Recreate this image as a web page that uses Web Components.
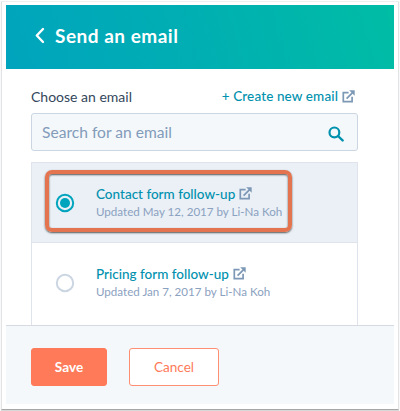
<!DOCTYPE html>
<html lang="en">
<head>
<meta charset="utf-8">
<title>Send an email</title>
<style>
html, body {
    margin: 0;
    height: 100%;
    overflow: hidden;
    background: #fff;
}
body {
    font-family: Lato, "Open Sans", sans-serif;
    font-size: 14px;
    color: #33475b;
}
</style>
</head>
<body>
<email-panel>
    <panel-header slot="header">Send an email</panel-header>
    <label-row>
        Choose an email
        <ext-link slot="action">+ Create new email</ext-link>
    </label-row>
    <search-field>Search for an email</search-field>
    <option-list>
        <email-option checked>
            <ext-link>Contact form follow-up</ext-link>
            <span slot="meta">Updated May 12, 2017 by Li-Na Koh</span>
        </email-option>
        <email-option>
            <ext-link>Pricing form follow-up</ext-link>
            <span slot="meta">Updated Jan 7, 2017 by Li-Na Koh</span>
        </email-option>
    </option-list>
    <action-button slot="footer" primary>Save</action-button>
    <action-button slot="footer">Cancel</action-button>
</email-panel>

<script>
// clones the markup into an open shadow root
function define(name, html) {
    const template = document.createElement("template")
    template.innerHTML = html
    customElements.define(name, class extends HTMLElement {
        constructor() {
            super()
            this.attachShadow({ mode: "open" }).append(template.content.cloneNode(true))
        }
    })
}

define("email-panel", /*html*/`
<style>
:host {
    display: flex;
    flex-direction: column;
    box-sizing: border-box;
    width: 398px;
    height: 409px;
    margin: 1px 0 0 1px;
    padding: 3px 4px 5px;
    border: 1px solid #e2e3e5;
    border-top-color: #efefef;
    border-bottom-color: #a6a6a6;
    box-shadow: 0 1px 1px #d8d8d8;
}
main {
    flex: 1;
    min-height: 0;
    display: flex;
    flex-direction: column;
    padding: 0 36px 0 25px;
}
footer {
    display: flex;
    gap: 22px;
    height: 56px;
    padding: 22px 25px 0;
    border-top: 1px solid #d6dbe2;
    background: #f4f8fb;
}
</style>
<slot name="header"></slot>
<main><slot></slot></main>
<footer><slot name="footer"></slot></footer>
`)

define("panel-header", /*html*/`
<style>
:host {
    display: flex;
    align-items: center;
    gap: 10px;
    box-sizing: border-box;
    height: 64px;
    padding: 0 0 3px 29px;
    background: linear-gradient(73deg, #00a4bd, #00afb2 50%, #00bda5);
    color: #fff;
    font-size: 19px;
    font-weight: 700;
    letter-spacing: 0.5px;
}
svg { display: block; margin-bottom: 1px; }
</style>
<svg width="10" height="17" viewBox="0 0 10 17" fill="none" stroke="#fff" stroke-width="2.4" stroke-linecap="round" stroke-linejoin="round">
    <path d="M8 2L1.8 8.5 8 15"/>
</svg>
<span><slot></slot></span>
`)

define("label-row", /*html*/`
<style>
:host {
    display: flex;
    justify-content: space-between;
    align-items: center;
    height: 20px;
    margin-top: 17px;
    padding-right: 3px;
}
</style>
<span><slot></slot></span>
<slot name="action"></slot>
`)

define("ext-link", /*html*/`
<style>
:host {
    display: flex;
    align-items: center;
    gap: 4px;
    color: #0091ae;
    font-size: 13.5px;
    line-height: 18px;
    font-weight: 500;
    letter-spacing: var(--track, 0.12px);
}
svg { display: block; }
</style>
<span><slot></slot></span>
<svg width="13" height="13" viewBox="0 0 13 13" fill="none" stroke="#7c98b6" stroke-width="1.7">
    <path d="M6.6 2.6H1.3v9h8.8V6.7M4.6 8.6l6-6"/>
    <path d="M7.2.3h5.5v5.5z" fill="#7c98b6" stroke="none"/>
</svg>
`)

define("search-field", /*html*/`
<style>
:host {
    display: flex;
    justify-content: space-between;
    align-items: center;
    box-sizing: border-box;
    height: 38px;
    margin-top: 7px;
    padding: 0 13px 0 10px;
    border: 1px solid #cbd6e2;
    border-radius: 3px;
    background: #f5f8fa;
    color: #829cba;
    font-size: 15.6px;
}
svg { display: block; margin-top: 4px; }
</style>
<span><slot></slot></span>
<svg width="16" height="16" viewBox="0 0 16 16" fill="none" stroke="#0091ae">
    <circle cx="6.4" cy="6.4" r="4.9" stroke-width="2.2"/>
    <path d="M10 10l4.6 4.4" stroke-width="2.4" stroke-linecap="round"/>
</svg>
`)

define("option-list", /*html*/`
<style>
:host {
    display: block;
    flex: 1;
    min-height: 0;
    margin-top: 11px;
    border: 1px solid #dfe3eb;
    border-bottom: 0;
    --track: 0;
}
</style>
<slot></slot>
`)

define("email-option", /*html*/`
<style>
:host {
    display: flex;
    align-items: center;
    gap: 21px;
    box-sizing: border-box;
    position: relative;
    height: 80px;
    padding-left: 23px;
}
:host([checked]) {
    background: #eaf0f6;
    border-bottom: 1px solid #dfe3eb;
}
.text { display: flex; flex-direction: column; gap: 1px; padding-bottom: 1px; }
:host(:not([checked])) .text { padding-bottom: 2px; }
.meta { font-size: 11.6px; line-height: 16px; color: #8ba1c0; }
svg { display: block; flex: none; }
circle { fill: none; stroke: #cbd6e2; stroke-width: 2; }
.dot { display: none; }
:host([checked]) circle { stroke: #00a4bd; }
:host([checked]) .dot { display: block; fill: #00a4bd; stroke: none; }
/* highlight frame around the picked option */
.mark { display: none; }
:host([checked]) .mark {
    display: block;
    position: absolute;
    left: 13px;
    top: 7px;
    width: 239px;
    height: 54px;
    border: 4px solid #e47450;
    border-radius: 7px;
    box-shadow: 0 1px 2px #555, inset 0 1px 2px #555;
}
</style>
<svg width="20" height="20" viewBox="0 0 20 20">
    <circle cx="10" cy="10" r="8.2"/>
    <circle class="dot" cx="10" cy="10" r="5"/>
</svg>
<div class="text">
    <slot></slot>
    <div class="meta"><slot name="meta"></slot></div>
</div>
<div class="mark"></div>
`)

define("action-button", /*html*/`
<style>
:host {
    display: flex;
    align-items: center;
    justify-content: center;
    box-sizing: border-box;
    width: 90px;
    height: 38px;
    padding-bottom: 1px;
    border: 1px solid #ff8f73;
    border-radius: 3px;
    background: #fff;
    color: #ff7a59;
    font-size: 13.6px;
}
:host([primary]) {
    width: 76px;
    border-color: #ff7a59;
    background: #ff7a59;
    color: #fff;
    font-weight: 700;
}
</style>
<span><slot></slot></span>
`)
</script>
</body>
</html>
